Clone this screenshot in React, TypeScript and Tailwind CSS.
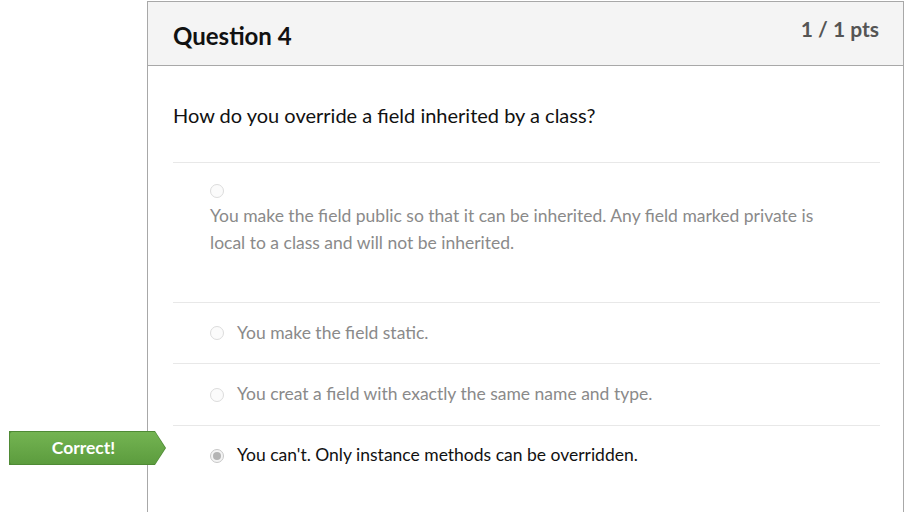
import React from "react";

const Radio = ({ checked = false }: { checked?: boolean }) => (
  <span
    className={
      "inline-flex h-[14px] w-[14px] shrink-0 items-center justify-center rounded-full border " +
      (checked ? "border-[#c8c8c8] bg-[#f4f4f4]" : "border-[#dcdcdc] bg-[#fbfbfb]")
    }
  >
    {checked && <span className="h-[8px] w-[8px] rounded-full bg-[#b4b4b4]" />}
  </span>
);

export default function App() {
  return (
    <div className="h-[512px] w-[904px] overflow-hidden bg-white font-['Lato','Open_Sans',sans-serif]">
      <div className="ml-[147px] mt-[1px] w-[757px] border-l border-r border-t border-[#a8a8a8]">
        <div className="flex h-[64px] items-start justify-between border-b border-[#a8a8a8] bg-[#f4f4f4] pl-[25px] pr-[24px]">
          <div className="pt-[16px] text-[24px] font-bold leading-[36px] text-[#111]">Question 4</div>
          <div className="pt-[12px] text-[21px] font-bold leading-[30px] text-[#555]">1 / 1 pts</div>
        </div>
        <div className="pb-[40px] pl-[25px] pr-[23px]">
          <div className="pb-[33px] pt-[35px] text-[20px] leading-[28px] text-[#111]">
            How do you override a field inherited by a class?
          </div>
          <div className="border-t border-[#e8e8e8] pb-[46px] pl-[37px] pt-[20px]">
            <div className="flex h-[16px] items-center">
              <Radio />
            </div>
            <div className="mt-[3px] text-[17.5px] leading-[27px] text-[#8a8a8a]">
              You make the field public so that it can be inherited. Any field marked private is
              <br />
              local to a class and will not be inherited.
            </div>
          </div>
          <div className="flex h-[61px] items-center gap-[13px] border-t border-[#e8e8e8] pl-[37px]">
            <Radio />
            <span className="text-[17.5px] text-[#8a8a8a]">You make the field static.</span>
          </div>
          <div className="flex h-[62px] items-center gap-[13px] border-t border-[#e8e8e8] pl-[37px]">
            <Radio />
            <span className="text-[17.5px] text-[#8a8a8a]">You creat a field with exactly the same name and type.</span>
          </div>
          <div className="relative flex h-[60px] items-center gap-[13px] border-t border-[#e8e8e8] pl-[37px]">
            <div className="absolute left-[-164px] top-[5px] flex h-[34px] w-[157px] items-center">
              <div className="relative h-[34px] w-[157px] bg-[#4f8a35] [clip-path:polygon(0_0,146px_0,157px_50%,146px_100%,0_100%)]">
                <div className="absolute inset-[1px] flex items-center justify-center rounded-[2px] bg-gradient-to-b from-[#74b452] to-[#5c9c3e] pr-[8px] text-[17.5px] font-bold text-white [clip-path:polygon(0_0,145px_0,155px_50%,145px_100%,0_100%)]">
                  Correct!
                </div>
              </div>
            </div>
            <Radio checked />
            <span className="text-[17.5px] text-[#111]">You can't. Only instance methods can be overridden.</span>
          </div>
        </div>
      </div>
    </div>
  );
}
